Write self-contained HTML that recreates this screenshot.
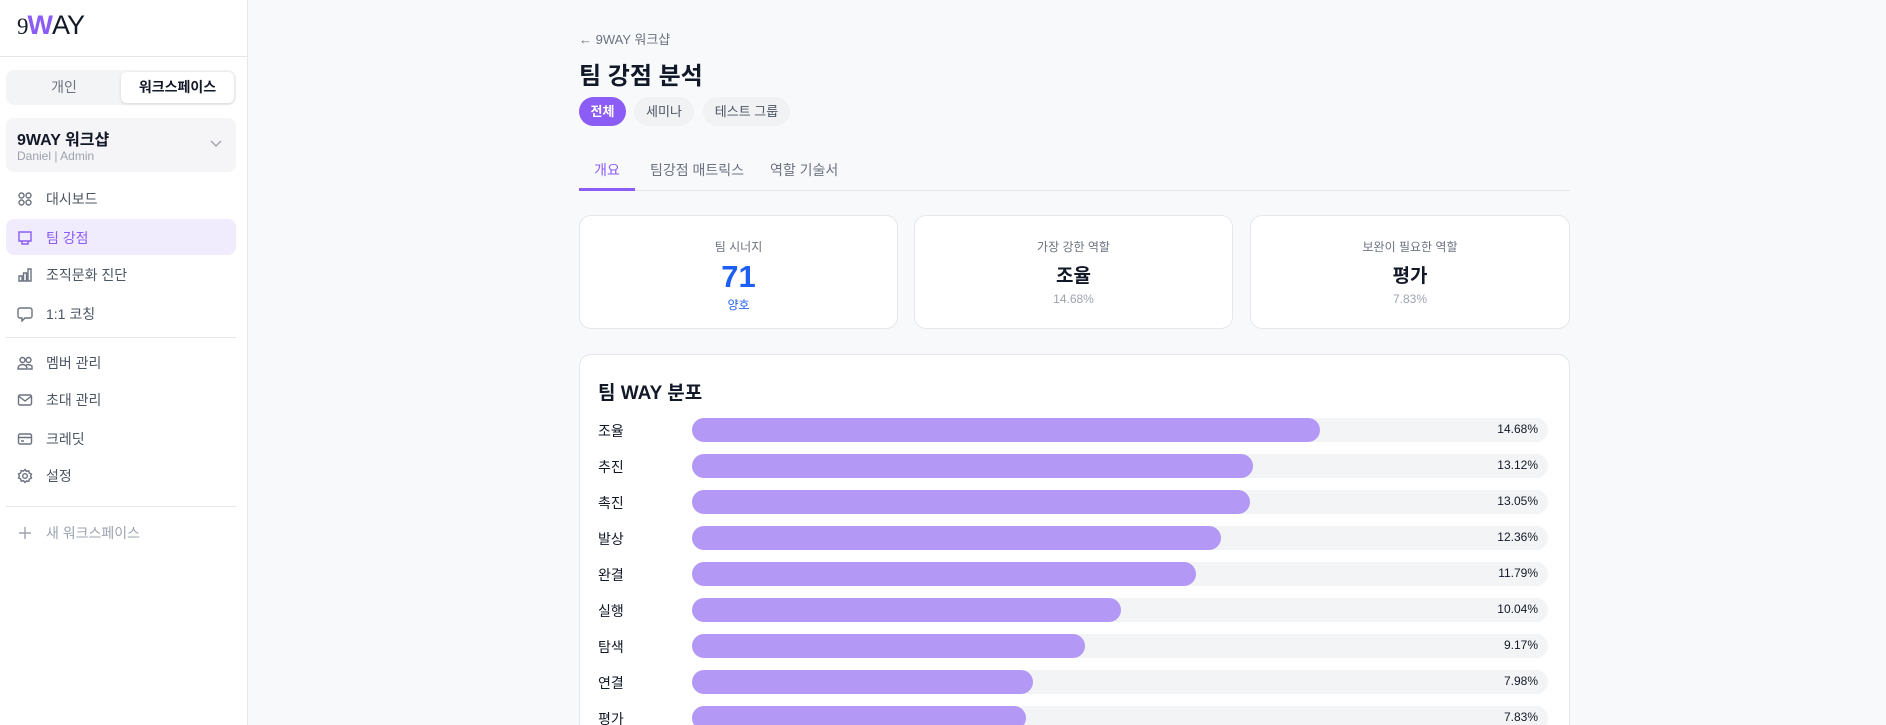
<!DOCTYPE html>
<html style="height:725px;overflow:hidden"><head><meta charset="utf-8"><style>
*{box-sizing:border-box;margin:0;padding:0}
html,body{height:725px;overflow:hidden}
body{width:1886px;background:#f8f9fb;font-family:"Liberation Sans","Noto Sans CJK KR",sans-serif;color:#111827;position:relative}
.sb{position:absolute;left:0;top:0;width:248px;height:725px;background:#fff;border-right:1px solid #e5e7eb}
.abs{position:absolute}
.nav{position:absolute;left:17px;font-size:14px;color:#4b5563;display:flex;align-items:center;gap:13px}
.nav svg{width:16px;height:16px;fill:none;stroke:#6b7280;stroke-width:1.4}
.hr{position:absolute;left:6px;width:230px;height:1px;background:#e5e7eb}
.card{position:absolute;background:#fff;border:1px solid #e5e7eb;border-radius:12px}
.lab{font-size:12px;color:#6b7280;text-align:center}
.row{position:absolute;left:598px;width:950px;height:24px}
.row .l{position:absolute;left:0;top:3px;font-size:14px;color:#111827}
.row .t{position:absolute;left:94px;top:0;width:856px;height:24px;background:#f3f4f6;border-radius:12px}
.row .f{position:absolute;left:0;top:0;height:24px;background:#b399f5;border-radius:12px}
.row .p{position:absolute;right:10px;top:4px;font-size:12px;color:#111827}
</style></head><body>
<div class="sb">
  <div class="abs" style="left:17px;top:10px;font-size:27px;line-height:30px;letter-spacing:-1px"><span style="font-family:'Liberation Serif',serif;font-size:23px">9</span><span style="color:#8b5cf6;font-weight:bold">W</span>AY</div>
  <div class="hr" style="left:0;width:248px;top:56px"></div>
  <div class="abs" style="left:6px;top:70px;width:230px;height:35px;background:#f3f4f6;border-radius:8px"></div>
  <div class="abs" style="left:8px;top:72px;width:112px;height:31px;line-height:31px;text-align:center;font-size:14px;color:#6b7280">개인</div>
  <div class="abs" style="left:121px;top:72px;width:113px;height:31px;line-height:31px;text-align:center;font-size:14px;font-weight:bold;background:#fff;border-radius:6px;box-shadow:0 1px 3px rgba(0,0,0,.12)">워크스페이스</div>
  <div class="abs" style="left:6px;top:118px;width:230px;height:54px;background:#f5f5f7;border-radius:8px"></div>
  <div class="abs" style="left:17px;top:126px;font-size:16px;font-weight:bold">9WAY 워크샵</div>
  <div class="abs" style="left:17px;top:149px;font-size:12px;color:#9ca3af">Daniel | Admin</div>
  <svg class="abs" style="left:209px;top:139px" width="14" height="10"><path d="M2 2l5 5 5-5" stroke="#9ca3af" stroke-width="1.4" fill="none"/></svg>
  <div class="abs" style="left:6px;top:219px;width:230px;height:36px;background:#f0ebfd;border-radius:8px"></div>
  <div class="nav" style="top:189px"><svg viewBox="0 0 16 16"><circle cx="4.5" cy="4.5" r="2.5"/><circle cx="11.5" cy="4.5" r="2.5"/><circle cx="4.5" cy="11.5" r="2.5"/><circle cx="11.5" cy="11.5" r="2.5"/></svg>대시보드</div>
  <div class="nav" style="top:228px;color:#8b5cf6"><svg viewBox="0 0 16 16" style="stroke:#8b5cf6"><path d="M2 2h12v9H2z M5 11v3h6v-3"/></svg>팀 강점</div>
  <div class="nav" style="top:265px"><svg viewBox="0 0 16 16"><path d="M2 14V9h3v5z M6.5 14V6h3v8z M11 14V2h3v12z"/></svg>조직문화 진단</div>
  <div class="nav" style="top:304px"><svg viewBox="0 0 16 16"><path d="M3 2h10a2 2 0 0 1 2 2v6a2 2 0 0 1-2 2H8l-3 3v-3H3a2 2 0 0 1-2-2V4a2 2 0 0 1 2-2z"/></svg>1:1 코칭</div>
  <div class="hr" style="top:337px"></div>
  <div class="nav" style="top:353px"><svg viewBox="0 0 16 16"><circle cx="5.5" cy="5" r="2.5"/><circle cx="11.5" cy="5" r="2.5"/><path d="M1 14c0-3 2-4.5 4.5-4.5S10 11 10 14zM9 10c1-.5 4-.5 6 1v3h-4"/></svg>멤버 관리</div>
  <div class="nav" style="top:390px"><svg viewBox="0 0 16 16"><rect x="1.5" y="3" width="13" height="10" rx="1.5"/><path d="M1.5 4l6.5 5 6.5-5"/></svg>초대 관리</div>
  <div class="nav" style="top:429px"><svg viewBox="0 0 16 16"><rect x="1.5" y="3" width="13" height="10" rx="1.5"/><path d="M1.5 6.5h13 M4 10h3"/></svg>크레딧</div>
  <div class="nav" style="top:466px"><svg viewBox="0 0 16 16"><circle cx="8" cy="8" r="2.3"/><path d="M8 1.5l1.5 1.8 2.3-.5.5 2.3 2.2 1-1 2 1 2-2.2 1-.5 2.3-2.3-.5L8 14.5l-1.5-1.8-2.3.5-.5-2.3-2.2-1 1-2-1-2 2.2-1 .5-2.3 2.3.5z"/></svg>설정</div>
  <div class="hr" style="top:506px"></div>
  <div class="nav" style="top:523px;color:#9ca3af"><svg viewBox="0 0 16 16" style="stroke:#9ca3af"><path d="M8 2v12M2 8h12"/></svg>새 워크스페이스</div>
</div>

<div class="abs" style="left:579px;top:29px;font-size:13px;color:#6b7280">← 9WAY 워크샵</div>
<div class="abs" style="left:579px;top:56px;font-size:24px;font-weight:bold">팀 강점 분석</div>
<div class="abs" style="left:579px;top:97px;width:47px;height:29px;line-height:29px;border-radius:15px;background:#8b5cf6;color:#fff;font-size:13px;font-weight:bold;text-align:center">전체</div>
<div class="abs" style="left:634px;top:97px;width:60px;height:29px;line-height:29px;border-radius:15px;background:#f1f2f4;color:#4b5563;font-size:13px;text-align:center">세미나</div>
<div class="abs" style="left:703px;top:97px;width:87px;height:29px;line-height:29px;border-radius:15px;background:#f1f2f4;color:#4b5563;font-size:13px;text-align:center">테스트 그룹</div>
<div class="abs" style="left:579px;top:190px;width:991px;height:1px;background:#e5e7eb"></div>
<div class="abs" style="left:579px;top:188px;width:56px;height:3px;background:#8b5cf6"></div>
<div class="abs" style="left:579px;top:160px;width:56px;text-align:center;font-size:14px;color:#8b5cf6">개요</div>
<div class="abs" style="left:650px;top:160px;font-size:14px;color:#6b7280">팀강점 매트릭스</div>
<div class="abs" style="left:770px;top:160px;font-size:14px;color:#6b7280">역할 기술서</div>

<div class="card" style="left:579px;top:215px;width:319px;height:114px">
  <div class="lab" style="margin-top:22px">팀 시너지</div>
  <div style="text-align:center;font-size:31px;font-weight:bold;color:#1d5ef5;line-height:36px;margin-top:4px">71</div>
  <div style="text-align:center;font-size:12px;color:#2563eb;margin-top:1px">양호</div>
</div>
<div class="card" style="left:914px;top:215px;width:319px;height:114px">
  <div class="lab" style="margin-top:22px">가장 강한 역할</div>
  <div style="text-align:center;font-size:19px;font-weight:bold;margin-top:6px">조율</div>
  <div class="lab" style="margin-top:4px;color:#9ca3af">14.68%</div>
</div>
<div class="card" style="left:1250px;top:215px;width:320px;height:114px">
  <div class="lab" style="margin-top:22px">보완이 필요한 역할</div>
  <div style="text-align:center;font-size:19px;font-weight:bold;margin-top:6px">평가</div>
  <div class="lab" style="margin-top:4px;color:#9ca3af">7.83%</div>
</div>

<div class="card" style="left:579px;top:354px;width:991px;height:371px;border-bottom:none;border-bottom-left-radius:0;border-bottom-right-radius:0"></div>
<div class="abs" style="left:598px;top:378px;font-size:19px;font-weight:bold">팀 WAY 분포</div>

<div class="row" style="top:418px"><div class="l">조율</div><div class="t"><div class="f" style="width:628px"></div><div class="p">14.68%</div></div></div>
<div class="row" style="top:454px"><div class="l">추진</div><div class="t"><div class="f" style="width:561px"></div><div class="p">13.12%</div></div></div>
<div class="row" style="top:490px"><div class="l">촉진</div><div class="t"><div class="f" style="width:558px"></div><div class="p">13.05%</div></div></div>
<div class="row" style="top:526px"><div class="l">발상</div><div class="t"><div class="f" style="width:529px"></div><div class="p">12.36%</div></div></div>
<div class="row" style="top:562px"><div class="l">완결</div><div class="t"><div class="f" style="width:504px"></div><div class="p">11.79%</div></div></div>
<div class="row" style="top:598px"><div class="l">실행</div><div class="t"><div class="f" style="width:429px"></div><div class="p">10.04%</div></div></div>
<div class="row" style="top:634px"><div class="l">탐색</div><div class="t"><div class="f" style="width:393px"></div><div class="p">9.17%</div></div></div>
<div class="row" style="top:670px"><div class="l">연결</div><div class="t"><div class="f" style="width:341px"></div><div class="p">7.98%</div></div></div>
<div class="row" style="top:706px;height:19px;overflow:hidden"><div class="l">평가</div><div class="t"><div class="f" style="width:334px"></div><div class="p">7.83%</div></div></div>
</body></html>
